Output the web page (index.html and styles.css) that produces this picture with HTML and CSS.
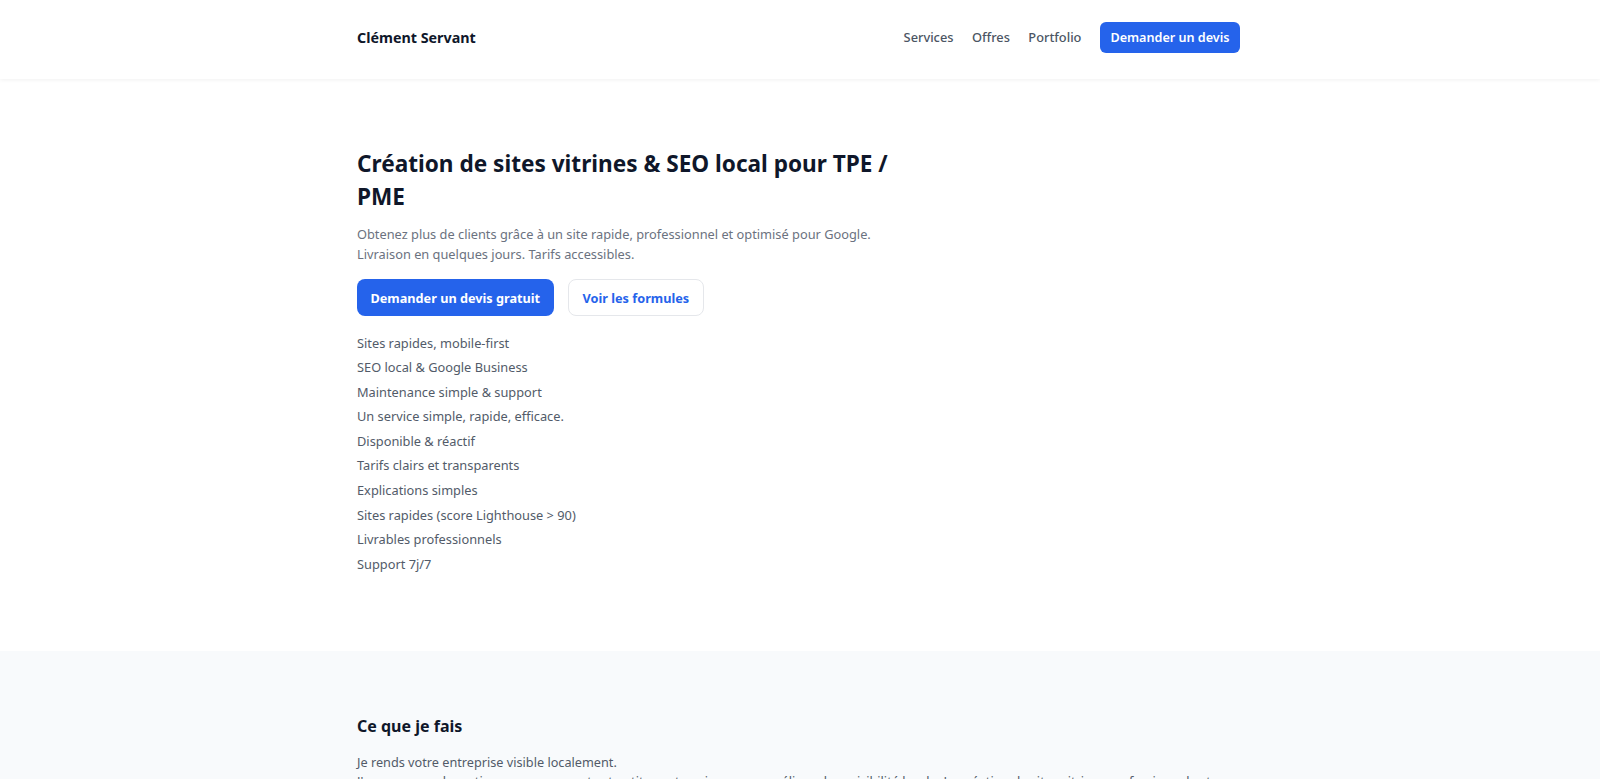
FILE: index.html
```html
<!DOCTYPE html>
<html lang="fr">
<head>
<meta charset="utf-8">
<title>Clément Servant</title>
<link rel="stylesheet" href="styles.css">
</head>
<body>
<header class="header">
  <div class="container header-inner">
    <a class="logo" href="#">Clément Servant</a>
    <nav class="nav">
      <a class="nav-link" href="#">Services</a>
      <a class="nav-link" href="#">Offres</a>
      <a class="nav-link" href="#">Portfolio</a>
      <a class="nav-cta" href="#">Demander un devis</a>
    </nav>
  </div>
</header>
<main>
  <section class="hero">
    <div class="container">
      <div class="hero-content">
        <h1 class="hero-title">Création de sites vitrines &amp; SEO local pour TPE / PME</h1>
        <p class="hero-lead">Obtenez plus de clients grâce à un site rapide, professionnel et optimisé pour Google. Livraison en quelques jours. Tarifs accessibles.</p>
        <div class="hero-actions">
          <a class="btn btn-primary" href="#">Demander un devis gratuit</a>
          <a class="btn btn-outline" href="#">Voir les formules</a>
        </div>
        <ul class="hero-list">
          <li>Sites rapides, mobile-first</li>
          <li>SEO local &amp; Google Business</li>
          <li>Maintenance simple &amp; support</li>
          <li>Un service simple, rapide, efficace.</li>
          <li>Disponible &amp; réactif</li>
          <li>Tarifs clairs et transparents</li>
          <li>Explications simples</li>
          <li>Sites rapides (score Lighthouse &gt; 90)</li>
          <li>Livrables professionnels</li>
          <li>Support 7j/7</li>
        </ul>
      </div>
    </div>
  </section>
  <section class="services">
    <div class="container">
      <h2 class="section-title">Ce que je fais</h2>
      <p class="section-text">Je rends votre entreprise visible localement.<br>J'accompagne les artisans, commerçants et petites entreprises pour améliorer leur visibilité locale. La création de sites vitrines professionnels et optimisés pour le référencement local.</p>
    </div>
  </section>
</main>
</body>
</html>
```

FILE: styles.css
```css
* { box-sizing: border-box; }
html, body { margin: 0; padding: 0; }
body {
  font-family: "Noto Sans", "Open Sans", "Liberation Sans", sans-serif;
  color: #0f172a;
  background: #ffffff;
  font-size: 13px;
}
a { text-decoration: none; }

.container {
  max-width: 920px;
  margin: 0 auto;
  padding: 0 20px 0 17px;
}

.header {
  height: 79px;
  background: #ffffff;
  box-shadow: 0 1px 4px rgba(0, 0, 0, 0.06);
  position: relative;
  z-index: 1;
}
.header-inner {
  height: 74px;
  display: flex;
  align-items: center;
  justify-content: space-between;
}
.logo {
  font-size: 14.3px;
  font-weight: 700;
  color: #0f172a;
}
.nav {
  display: flex;
  align-items: center;
  gap: 18.5px;
}
.nav-link {
  color: #4b5563;
  font-size: 12.8px;
  font-weight: 500;
}
.nav-cta {
  background: #2563eb;
  color: #ffffff;
  font-size: 12.6px;
  font-weight: 600;
  height: 31px;
  line-height: 31px;
  padding: 0 10.5px;
  border-radius: 6px;
}

.hero {
  padding: 69px 0 75px;
}
.hero-content {
  max-width: 556px;
}
.hero-title {
  margin: 0;
  font-size: 22.6px;
  line-height: 32.5px;
  font-weight: 700;
  color: #0f172a;
}
.hero-lead {
  margin: 11px 0 0;
  font-size: 12.8px;
  line-height: 20px;
  color: #6b7280;
}
.hero-actions {
  display: flex;
  gap: 14.5px;
  margin-top: 15px;
}
.btn {
  display: inline-flex;
  align-items: center;
  height: 37px;
  padding: 0 13.5px;
  border-radius: 8px;
  font-size: 12.7px;
  font-weight: 700;
}
.btn-primary {
  background: #2563eb;
  color: #ffffff;
}
.btn-outline {
  background: #ffffff;
  color: #2563eb;
  border: 1px solid #e5e7eb;
}
.hero-list {
  list-style: none;
  margin: 14.5px 0 0;
  padding: 0;
}
.hero-list li {
  font-size: 12.8px;
  line-height: 24.6px;
  color: #525b69;
}

.services {
  background: #f8fafc;
  padding: 61px 0 60px;
}
.section-title {
  margin: 0;
  font-size: 16px;
  line-height: 28px;
  font-weight: 700;
  color: #0f172a;
}
.section-text {
  margin: 13px 0 0;
  font-size: 12.7px;
  line-height: 18.5px;
  color: #525b69;
}
```
